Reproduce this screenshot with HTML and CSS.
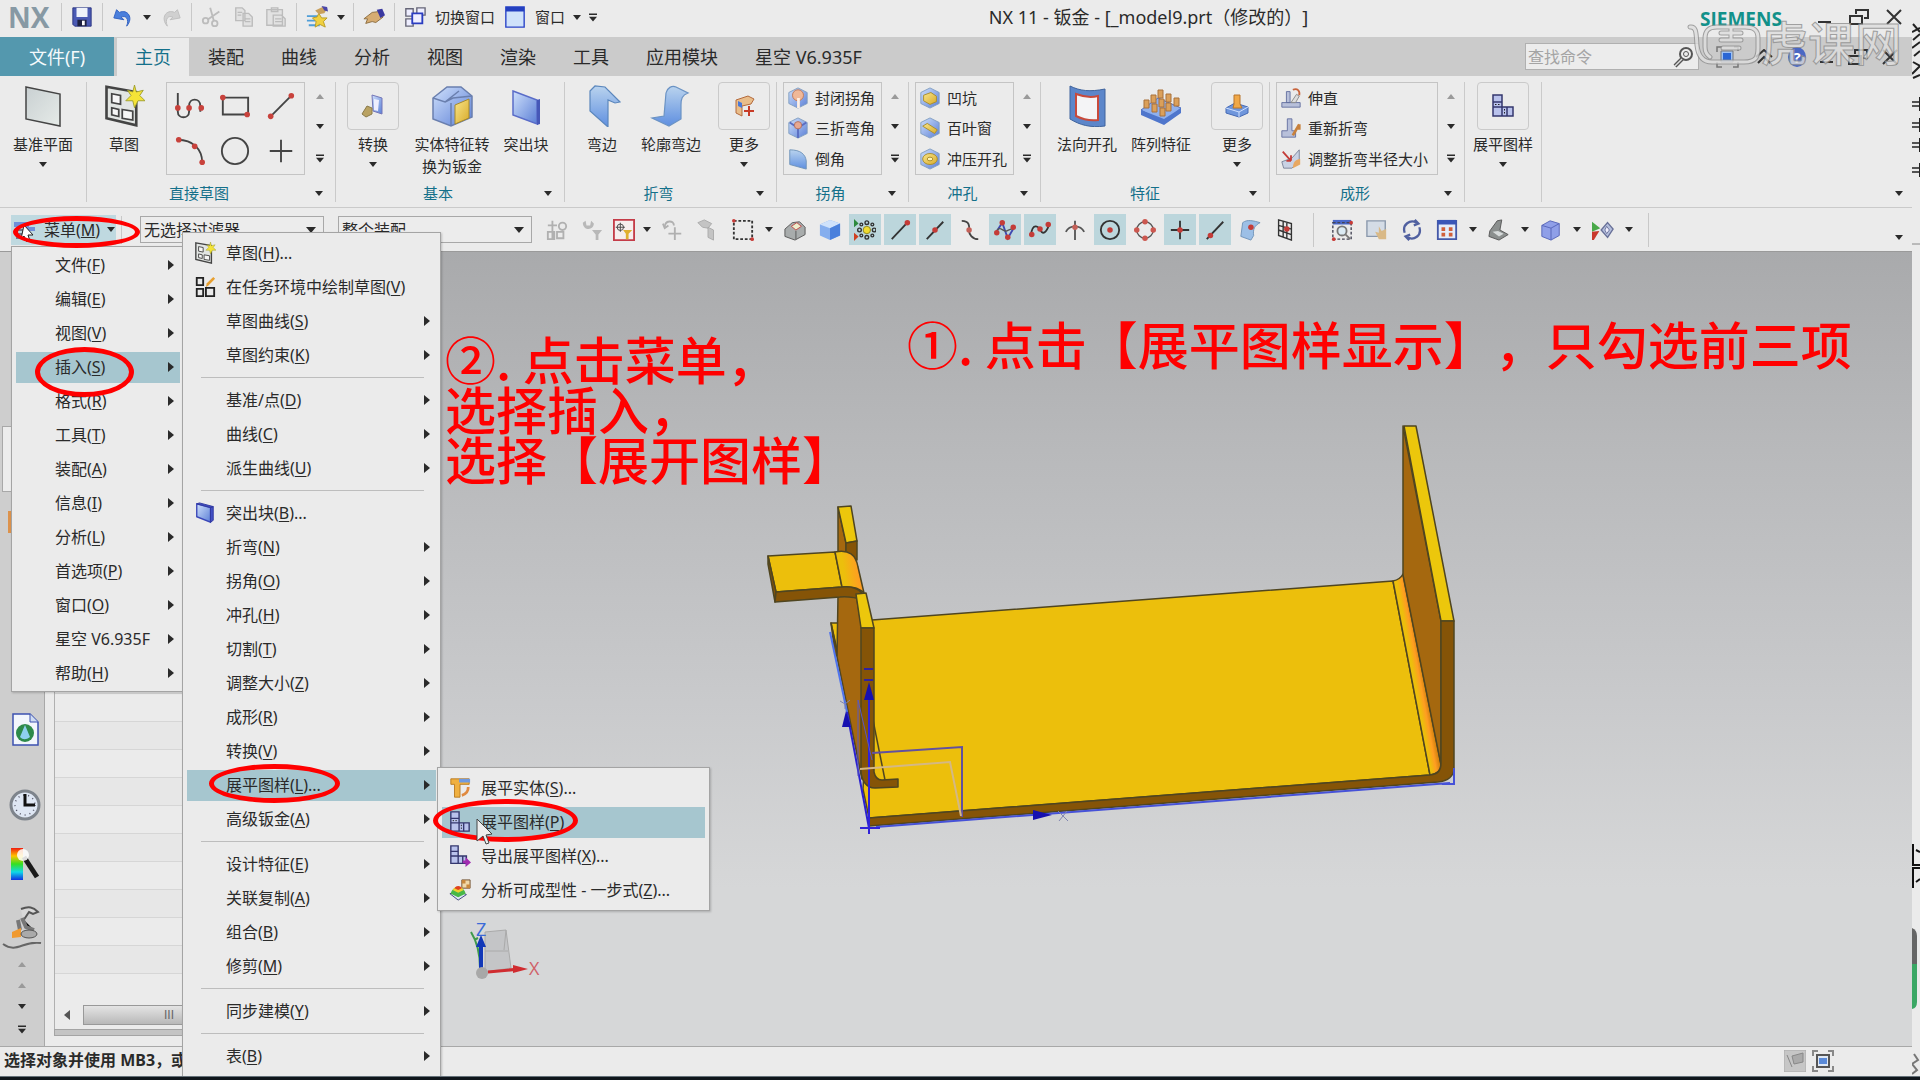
FILE: index.html
```html
<!DOCTYPE html>
<html lang="zh-CN">
<head>
<meta charset="utf-8">
<title>NX 11 - 钣金</title>
<link rel="stylesheet" href="styles.css">
</head>
<body>
<svg class="defs" width="0" height="0" aria-hidden="true">
  <defs>
    <linearGradient id="blue" x1="0" y1="0" x2="1" y2="1"><stop offset="0" stop-color="#cfe0fb"/><stop offset="1" stop-color="#5b7fd6"/></linearGradient>
    <linearGradient id="sky" x1="0" y1="0" x2="0" y2="1"><stop offset="0" stop-color="#b9d3ee"/><stop offset="1" stop-color="#5f8fe0"/></linearGradient>
    <linearGradient id="gold" x1="0" y1="0" x2="1" y2="1"><stop offset="0" stop-color="#f8e58a"/><stop offset="1" stop-color="#d9ab2a"/></linearGradient>
    <linearGradient id="plane" x1="0" y1="0" x2="1" y2="1"><stop offset="0" stop-color="#c9d0d2"/><stop offset="1" stop-color="#e6ebe8"/></linearGradient>
    <linearGradient id="bend" x1="0" y1="0" x2="1" y2="-0.2"><stop offset="0.2" stop-color="#ecbf0c"/><stop offset="0.7" stop-color="#ff9d22"/><stop offset="1" stop-color="#e88a10"/></linearGradient>
    <linearGradient id="longbend" gradientUnits="userSpaceOnUse" x1="1412" y1="677" x2="1423" y2="675"><stop offset="0.200" stop-color="#ecbf0c"/><stop offset="0.650" stop-color="#ff9d22"/><stop offset="1" stop-color="#d88410"/></linearGradient>
    <linearGradient id="rainbow" x1="0" y1="0" x2="0" y2="1"><stop offset="0" stop-color="#f01c10"/><stop offset="0.25" stop-color="#ffc400"/><stop offset="0.5" stop-color="#35e020"/><stop offset="0.75" stop-color="#10d8e8"/><stop offset="1" stop-color="#1030e0"/></linearGradient>
    <symbol id="down" viewBox="0 0 10 6"><path d="M0 0h10l-5 6z"/></symbol>
    <symbol id="up" viewBox="0 0 10 6"><path d="M0 6h10l-5-6z"/></symbol>
    <symbol id="more" viewBox="0 0 10 10"><path d="M0 0h10v2H0zM0 4h10l-5 6z"/></symbol>
    <symbol id="right" viewBox="0 0 6 10"><path d="M0 0v10l6-5z"/></symbol>
    <symbol id="restore" viewBox="0 0 20 16"><path d="M7 5V1h12v8h-4M1 7h12v8H1z" fill="none" stroke="#333" stroke-width="2"/></symbol>
    <symbol id="cross" viewBox="0 0 16 16"><path d="M1 1l14 14M15 1L1 15" stroke="#333" stroke-width="2"/></symbol>
    <symbol id="flat" viewBox="0 0 24 24"><path d="M2 1h9v21H2zM11 13h11v9H11z" fill="#b9c2ec" stroke="#34376e" stroke-width="1.5"/><path d="M2 8h9M2 13h9M16 13v9" stroke="#34376e" stroke-width="1.5"/><path d="M4 10.5h5M13.500 15v5" stroke="#222" stroke-dasharray="1.500 1.500"/></symbol>
    <symbol id="sheet" viewBox="0 0 24 24"><path d="M2 1l17 3v19L2 19z" fill="#e2e5e3" stroke="#444" stroke-width="1.500"/><path d="M5 5l5 1v5l-5-1zM5 13l4 1v4l-4-1zM11 14l6 1v5l-6-1z" fill="#f6f6f6" stroke="#444"/><path d="M18 0l1 4 4-1-2 3 3 3-4 0-2 4-1-4-4 0 3-3-2-3 3 1z" fill="#f5e437" stroke="#9a9a2a" stroke-width=".5"/></symbol>
    <symbol id="block" viewBox="0 0 24 24"><path d="M3 2l15 4v16L3 16z" fill="url(#blue)" stroke="#3a46b8" stroke-width="1.500"/><path d="M18 6l3-1v15l-3 2zM3 2l3-1 15 4-3 1z" fill="#4250c4" stroke="#3038a0"/></symbol>
    <symbol id="hex" viewBox="0 0 24 24"><path d="M12 1l10 5v12l-10 5L2 18V6z" fill="url(#blue)" stroke="#7f9cc0"/></symbol>
  </defs>
</svg>

<div class="app">
<div class="main">
  <header class="titlebar">
    <div class="quick">
      <span class="nx">NX</span><i class="sep"></i>
      <button class="qa" aria-label="保存"><svg viewBox="0 0 24 24"><path d="M2 2h20v20H4l-2-2z" fill="#4a5ab4" stroke="#2b3480"/><path d="M6 2h12v10H6z" fill="#eef2fa"/><path d="M7 15h10v7H7z" fill="#1c2040"/><path d="M12 16h3v5h-3z" fill="#fff"/></svg></button><i class="sep"></i>
      <button class="qa" aria-label="撤销"><svg viewBox="0 0 24 24"><path d="M2 13l3-9 3 3c9-4 16 6 8 15 3-8-1-12-6-10l3 3z" fill="#4a7fdc" stroke="#2f5fc0"/></svg></button>
      <svg class="caret" aria-hidden="true"><use href="#down"/></svg>
      <button class="qa" aria-label="重做"><svg viewBox="0 0 24 24"><path d="M22 13l-3-9-3 3C7 3 0 13 8 22 5 14 9 10 14 12l-3 3z" fill="#d0d0d0" stroke="#bdbdbd"/></svg></button><i class="sep"></i>
      <button class="qa" aria-label="剪切"><svg viewBox="0 0 24 24" fill="none" stroke="#bcbcbc" stroke-width="2"><path d="M10 2l4 14M20 6L7 15"/><circle cx="15" cy="19" r="3"/><circle cx="5" cy="16" r="3"/></svg></button>
      <button class="qa" aria-label="复制"><svg viewBox="0 0 24 24" fill="#e2e2e2" stroke="#bcbcbc" stroke-width="1.500"><path d="M3 2h7l3 3v11H3zM11 8h6l4 4v10H11z"/><path d="M5 7h5M5 10h4M13 14h6M13 17h6"/></svg></button>
      <button class="qa" aria-label="粘贴"><svg viewBox="0 0 24 24" fill="#e2e2e2" stroke="#bcbcbc" stroke-width="1.500"><path d="M2 4h17v17H2zM7 2h7v4H7zM9 10h9l4 4v8H9z"/><path d="M11 14h7M11 17h8"/></svg></button><i class="sep"></i>
      <button class="qa" aria-label="重复命令"><svg viewBox="0 0 24 24"><path d="M1 11h12M1 16h11M3 21h12" stroke="#4f9ed8" stroke-width="2"/><path d="M14 8l3 5 6 0-4 4 2 6-6-3-5 3 1-6-4-4 5-1z" fill="#f0d040" stroke="#b89a20"/><path d="M10 5l8-4 5 2-3 5-6 1z" fill="#c9a05c"/><path d="M17 0l6 1 1 5-4-1z" fill="#4a46a8"/></svg></button>
      <svg class="caret" aria-hidden="true"><use href="#down"/></svg><i class="sep"></i>
      <button class="qa" aria-label="触摸模式"><svg viewBox="0 0 24 24"><path d="M1 14l9-7 8-1 4 6-8 6-4-1-7 2 2-5z" fill="#d6ac72" stroke="#8a6a3c"/><path d="M15 4l6-1 3 7-5 3z" fill="#3a38a0"/></svg></button><i class="sep"></i>
      <button class="qa wide"><svg viewBox="0 0 24 24" fill="#eef" stroke="#667" stroke-width="1.500"><path d="M2 3h8v8H2zM14 2h9v8h-9zM2 14h8v8H2z"/><path d="M9 8h11v11H9z" stroke="#2a3cc0" stroke-width="2"/></svg><span>切换窗口</span></button>
      <button class="qa wide"><svg viewBox="0 0 24 24"><path d="M2 1h20v22H2z" fill="#cfe2fb" stroke="#2a44c8" stroke-width="1.500"/><path d="M2 1h20v5H2z" fill="#2440c0"/></svg><span>窗口</span></button>
      <svg class="caret" aria-hidden="true"><use href="#down"/></svg>
      <svg class="caret tall" aria-hidden="true"><use href="#more"/></svg>
    </div>
    <h1 class="doc-title">NX 11 - 钣金 - [_model9.prt（修改的）]</h1>
    <div class="brand">SIEMENS</div>
    <div class="winbtns">
      <button aria-label="最小化"><svg width="14" height="16"><path d="M0 13h13" stroke="#333" stroke-width="2"/></svg></button>
      <button aria-label="还原"><svg width="20" height="16"><use href="#restore"/></svg></button>
      <button aria-label="关闭"><svg width="16" height="16"><use href="#cross"/></svg></button>
    </div>
  </header>

  <nav class="tabs">
    <button class="tab file">文件(F)</button>
    <button class="tab active">主页</button><button class="tab">装配</button><button class="tab">曲线</button><button class="tab">分析</button><button class="tab">视图</button><button class="tab">渲染</button><button class="tab">工具</button><button class="tab">应用模块</button><button class="tab">星空 V6.935F</button>
    <label class="search"><input type="text" placeholder="查找命令" aria-label="查找命令"><svg width="22" height="22" fill="none" stroke="#555"><circle cx="14" cy="8" r="6" stroke-width="2"/><circle cx="14" cy="8" r="2.500"/><path d="M10 13l-7 7" stroke-width="4"/><path d="M10 13l-7 7" stroke-width="1.500" stroke="#ddd"/></svg></label>
    <div class="tabtools">
      <button aria-label="全屏"><svg width="24" height="22"><path d="M1 6V1h5M18 1h4v4M1 16v5h5M22 16v5h-5" fill="none" stroke="#777" stroke-width="1.500"/><path d="M5 5h12v11H5z" fill="#9ec2f4" stroke="#777"/><path d="M7 7h8v7H7z" fill="#2a66d4"/></svg></button>
      <button aria-label="折叠功能区"><svg width="20" height="16"><path d="M2 8l8-7 8 7M4 14l6-6 6 6" fill="none" stroke="#333" stroke-width="2"/></svg></button>
      <button class="help" aria-label="帮助">?</button>
      <button aria-label="最小化文档"><svg width="14" height="16"><path d="M0 13h13" stroke="#333" stroke-width="2"/></svg></button>
      <button aria-label="还原文档"><svg width="20" height="16"><use href="#restore"/></svg></button>
      <button aria-label="关闭文档"><svg width="16" height="16"><use href="#cross"/></svg></button>
    </div>
  </nav>

  <section class="ribbon">
    <div class="group g-plane"><div class="gbody">
      <button class="big"><span class="pic"><svg viewBox="0 0 42 42"><path d="M4 2l34 7v32L4 34z" fill="url(#plane)" stroke="#444" stroke-width="1.500"/></svg></span>基准平面<svg class="caret"><use href="#down"/></svg></button>
    </div></div>
    <div class="group g-sketch"><div class="gbody">
      <button class="big size-m"><span class="pic"><svg viewBox="0 0 24 24"><use href="#sheet"/></svg></span>草图</button>
      <div class="curves">
        <button aria-label="轮廓"><svg viewBox="0 0 32 32" fill="none" stroke="#444" stroke-width="2"><path d="M3 2v20c0 8 12 8 12 0v-6c0-9 12-9 12 0v6"/><g fill="#c8423c" stroke="none"><circle cx="3" cy="18" r="3"/><circle cx="15" cy="18" r="3"/><circle cx="28" cy="18" r="3"/></g></svg></button>
        <button aria-label="矩形"><svg viewBox="0 0 32 32" fill="none" stroke="#444" stroke-width="2"><path d="M3 7h27v18H3z"/><g fill="#c8423c" stroke="none"><circle cx="3" cy="7" r="3"/><circle cx="29" cy="25" r="3"/></g></svg></button>
        <button aria-label="直线"><svg viewBox="0 0 32 32" fill="none" stroke="#444" stroke-width="2"><path d="M5 27L27 5"/><g fill="#c8423c" stroke="none"><circle cx="5" cy="27" r="3"/><circle cx="27" cy="5" r="3"/></g></svg></button>
        <button aria-label="圆弧"><svg viewBox="0 0 32 32" fill="none" stroke="#444" stroke-width="2"><path d="M3 4c16 0 26 10 26 24"/><g fill="#c8423c" stroke="none"><circle cx="4" cy="4" r="3"/><circle cx="21" cy="11" r="3"/><circle cx="29" cy="28" r="3"/></g></svg></button>
        <button aria-label="圆"><svg viewBox="0 0 32 32"><circle cx="16" cy="16" r="14" fill="none" stroke="#444" stroke-width="2"/></svg></button>
        <button aria-label="点"><svg viewBox="0 0 32 32"><path d="M16 4v24M4 16h24" stroke="#444" stroke-width="2"/></svg></button>
      </div>
      <div class="scroll"><svg class="caret dim"><use href="#up"/></svg><svg class="caret"><use href="#down"/></svg><svg class="caret tall"><use href="#more"/></svg></div>
    </div><div class="gfoot"><span>直接草图</span><svg class="caret"><use href="#down"/></svg></div></div>
    <div class="group g-basic"><div class="gbody">
      <button class="big size-m"><span class="pic framed"><svg viewBox="0 0 24 24"><path d="M11 1l10 3v16l-9-3z" fill="url(#blue)" stroke="#7476b8"/><path d="M13 5l5 1-1 11-4-1z" fill="#eef"/><path d="M1 20l5-8 5 2v6l-6 3z" fill="#b9a262" stroke="#8a7a4a"/></svg></span>转换<svg class="caret"><use href="#down"/></svg></button>
      <button class="big size-l"><span class="pic"><svg viewBox="0 0 42 42"><path d="M2 13L16 2h14l11 9v21L20 41 2 34z" fill="url(#blue)" stroke="#6a7fae" stroke-width="1.500"/><path d="M2 13l12 4 14-11M14 17l8-4 19-2M20 18v23" fill="none" stroke="#6a7fae" stroke-width="1.500"/><path d="M24 20l14-6v19l-14 6z" fill="url(#gold)" stroke="#a88a2a"/></svg></span>实体特征转<br>换为钣金</button>
      <button class="big size-s"><span class="pic"><svg viewBox="0 0 42 42"><path d="M8 6l24 9v24L8 30z" fill="url(#blue)" stroke="#5a6cc8" stroke-width="1.500"/><path d="M32 15l3-1v25l-3 1z" fill="#4658b8"/></svg></span>突出块</button>
    </div><div class="gfoot"><span>基本</span><svg class="caret"><use href="#down"/></svg></div></div>
    <div class="group g-fold"><div class="gbody">
      <button class="big size-m"><span class="pic"><svg viewBox="0 0 42 42"><path d="M9 6l5-5 10 1 15 15-5 1-7-3v27L9 26z" fill="url(#sky)" stroke="#5b87bd" stroke-width="1.200"/></svg></span>弯边</button>
      <button class="big size-s"><span class="pic"><svg viewBox="0 0 42 42"><path d="M16 8c1-5 6-8 10-6l12 6c-6 2-7 6-7 12v14l-12 7L2 33l12-2z" fill="url(#sky)" stroke="#6b93c4" stroke-width="1.200"/></svg></span>轮廓弯边</button>
      <button class="big size-s push"><span class="pic framed"><svg viewBox="0 0 24 24"><path d="M4 6l12-4 6 3-3 5-9 2v10l-6-3z" fill="#e9bd8a" stroke="#b46a3c"/><path d="M6 7l4 2v5l-4-2z" fill="#4a78d8"/><path d="M17 12v10M12 17h10" stroke="#c83c28" stroke-width="2"/></svg></span>更多<svg class="caret"><use href="#down"/></svg></button>
    </div><div class="gfoot"><span>折弯</span><svg class="caret"><use href="#down"/></svg></div></div>
    <div class="group g-corner"><div class="gbody">
      <div class="list">
        <button><svg viewBox="0 0 24 24"><use href="#hex"/><circle cx="12" cy="9" r="6" fill="#f0b898" stroke="#c07a5a"/><path d="M11 12h3v11h-3z" fill="#fff0e4"/></svg>封闭拐角</button>
        <button><svg viewBox="0 0 24 24"><use href="#hex"/><path d="M12 12v11M12 12L3 6M12 12l9-6" stroke="#5a6cc0" stroke-width="2"/><circle cx="12" cy="9" r="4" fill="#e8a890" stroke="#b07060"/></svg>三折弯角</button>
        <button><svg viewBox="0 0 24 24"><path d="M3 2c12 0 17 5 18 12v9L3 18z" fill="url(#sky)" stroke="#6f93b8"/></svg>倒角</button>
      </div>
      <div class="scroll"><svg class="caret dim"><use href="#up"/></svg><svg class="caret"><use href="#down"/></svg><svg class="caret tall"><use href="#more"/></svg></div>
    </div><div class="gfoot"><span>拐角</span><svg class="caret"><use href="#down"/></svg></div></div>
    <div class="group g-punch"><div class="gbody">
      <div class="list">
        <button><svg viewBox="0 0 24 24"><use href="#hex"/><path d="M5 9l8-3 6 4v6l-7 3-7-4z" fill="url(#gold)" stroke="#a68c2c"/></svg>凹坑</button>
        <button><svg viewBox="0 0 24 24"><use href="#hex"/><path d="M4 10l5-3 11 7-3 4z" fill="url(#gold)" stroke="#a68c2c"/></svg>百叶窗</button>
        <button><svg viewBox="0 0 24 24"><use href="#hex"/><ellipse cx="12" cy="12" rx="8" ry="6" fill="url(#gold)" stroke="#a68c2c"/><ellipse cx="12" cy="12" rx="3" ry="2" fill="#fff2b0" stroke="#a68c2c"/></svg>冲压开孔</button>
      </div>
      <div class="scroll"><svg class="caret dim"><use href="#up"/></svg><svg class="caret"><use href="#down"/></svg><svg class="caret tall"><use href="#more"/></svg></div>
    </div><div class="gfoot"><span>冲孔</span><svg class="caret"><use href="#down"/></svg></div></div>
    <div class="group g-feature"><div class="gbody">
      <button class="big size-l"><span class="pic"><svg viewBox="0 0 42 42"><path d="M4 1c10 5 20 6 35 3v37C24 43 14 40 4 34z" fill="#5c86ca" stroke="#3f639c"/><path d="M10 9c8 3 14 4 22 2v24c-8 1-14 0-22-4z" fill="#f4f4f6" stroke="#c84a3c" stroke-width="2"/></svg></span>法向开孔</button>
      <button class="big size-s"><span class="pic"><svg viewBox="0 0 42 42"><path d="M1 25l17-12 23 10-17 15z" fill="#8fb0ee" stroke="#4f6fc0"/><path d="M1 25l23 9v6L1 30zM24 34l17-11v5L24 40z" fill="#4f76cc"/><g fill="#dba05a" stroke="#a8703a"><path d="M18 5h5v8h-5zM26 9h5v8h-5zM34 13h5v8h-5zM11 10h5v8h-5zM19 14h5v8h-5zM26 18h5v8h-5zM4 15h5v8H4zM12 19h5v8h-5zM20 23h5v8h-5z"/></g></svg></span>阵列特征</button>
      <button class="big size-s push"><span class="pic framed"><svg viewBox="0 0 24 24"><path d="M1 14l9-5 13 4v6l-9 4-13-4z" fill="#6f96dc" stroke="#466ab4"/><path d="M1 14l13 4 9-5M14 18v5" fill="none" stroke="#cfe0ff"/><path d="M9 1h6v9l2 4H8l1-4z" fill="#f0a848" stroke="#b8742a"/></svg></span>更多<svg class="caret"><use href="#down"/></svg></button>
    </div><div class="gfoot"><span>特征</span><svg class="caret"><use href="#down"/></svg></div></div>
    <div class="group g-form"><div class="gbody">
      <div class="list wide">
        <button><svg viewBox="0 0 24 24"><path d="M2 17h20v5H2zM7 5h4v12H7z" fill="#b8c0da" stroke="#6470a0"/><path d="M12 17l6-9 3 2-4 7z" fill="#ddd" stroke="#888"/><path d="M14 3c5-2 8 1 7 6" fill="none" stroke="#c8643c" stroke-width="2"/></svg>伸直</button>
        <button><svg viewBox="0 0 24 24"><path d="M2 15h6V2h5v13h4v7H2z" fill="#b8c0da" stroke="#6470a0"/><path d="M14 20l7-12M21 8v6" stroke="#c8813c" stroke-width="3"/></svg>重新折弯</button>
        <button><svg viewBox="0 0 24 24"><path d="M2 15l11-4 8-9v12l-8 8H4z" fill="#c9d2e4" stroke="#7a8298"/><path d="M3 4l9 10M12 14v-6M12 14H7" stroke="#c43c38" stroke-width="2"/><path d="M14 22c0-6 3-10 8-10v6z" fill="#e8a862"/></svg>调整折弯半径大小</button>
      </div>
      <div class="scroll"><svg class="caret dim"><use href="#up"/></svg><svg class="caret"><use href="#down"/></svg><svg class="caret tall"><use href="#more"/></svg></div>
    </div><div class="gfoot"><span>成形</span><svg class="caret"><use href="#down"/></svg></div></div>
    <div class="group g-flat"><div class="gbody">
      <button class="big"><span class="pic framed"><svg viewBox="0 0 24 24"><use href="#flat"/></svg></span>展平图样<svg class="caret"><use href="#down"/></svg></button>
    </div></div>
    <svg class="caret ribbon-more"><use href="#down"/></svg>
  </section>

  <section class="selbar">
    <button class="menu-btn"><svg width="24" height="24"><path d="M1 4h15v5H1zM13 9h9v4h-9z" fill="#6f8fd8"/><path d="M3 12h9M3 16h9M3 20h9" stroke="#778" stroke-width="2"/><path d="M11 7l9 10h-5l2 6-3 1-3-6-3 3z" fill="#fff" stroke="#222"/></svg><span>菜单(<u>M</u>)</span><svg class="caret"><use href="#down"/></svg></button>
    <i class="sep"></i>
    <div class="combo"><select aria-label="选择过滤器"><option>无选择过滤器</option></select><svg class="caret big-caret"><use href="#down"/></svg></div>
    <div class="combo second"><select aria-label="选择范围"><option>整个装配</option></select><svg class="caret big-caret"><use href="#down"/></svg></div>
    <div class="tools">
      <button class="tool" aria-label="装配导航"><svg viewBox="0 0 24 24" fill="none" stroke="#b0b0b0" stroke-width="2"><path d="M7 2v20M2 7h10M2 14h7v8H2zM12 14h7v7h-7z"/><circle cx="18" cy="8" r="4"/></svg></button>
      <button class="tool" aria-label="重置过滤器"><svg viewBox="0 0 24 24" fill="#b8b8b8"><path d="M2 4c0 9 12 9 12 1l-3-3-1 5-4 0-1-5z"/><path d="M12 12h11l-4 5v6h-3v-6z"/></svg></button>
      <button class="tool slim" aria-label="类型过滤器"><svg viewBox="0 0 24 24"><path d="M1 1h22v22H1z" fill="#f6eeee" stroke="#c43c48" stroke-width="2"/><path d="M8 4v10M3 9h10" stroke="#444"/><circle cx="8" cy="9" r="3.500" fill="none" stroke="#444"/><path d="M11 12h10l-4 4v6h-3v-6z" fill="#e0b030"/></svg></button>
      <svg class="caret"><use href="#down"/></svg>
      <button class="tool" aria-label="上一选择"><svg viewBox="0 0 24 24" fill="none" stroke="#b0b0b0" stroke-width="2"><path d="M3 9c0-8 10-8 10-2M14 9v14M7 16h14"/><path d="M1 5l2 5 4-3"/></svg></button>
      <button class="tool" aria-label="选择优先级"><svg viewBox="0 0 24 24"><path d="M1 4l7-3 8 4-4 5-6-1zM12 9l6 3v11l-6-3z" fill="#c4c4c4" stroke="#aaa"/></svg></button>
      <button class="tool" aria-label="矩形选择"><svg viewBox="0 0 24 24"><path d="M2 2h20v20H2z" fill="none" stroke="#333" stroke-width="2" stroke-dasharray="3 2"/><circle cx="2" cy="2" r="2" fill="#c83c38"/><circle cx="22" cy="22" r="2" fill="#c83c38"/></svg></button>
      <svg class="caret"><use href="#down"/></svg>
      <button class="tool" aria-label="隐藏实体"><svg viewBox="0 0 24 24"><path d="M1 11l8-7 8-1 6 6v8l-11 6L1 19z" fill="#a8acac" stroke="#555"/><path d="M8 8l6-4 5 4-6 4z" fill="#eec" stroke="#c04848"/><path d="M13 13v9" stroke="#555"/></svg></button>
      <button class="tool" aria-label="着色"><svg viewBox="0 0 24 24"><path d="M1 6l11-5 11 4v13l-11 5-11-5z" fill="#85aeee"/><path d="M1 6l11 4 11-5-11-4z" fill="#cfe2fb"/><path d="M12 10v13l11-5V5z" fill="#4a80dc"/></svg></button>
      <button class="tool on" aria-label="启用捕捉点"><svg viewBox="0 0 24 24"><path d="M0 0l5 5-5 4z" fill="#2c8a3c"/><path d="M0 15l5 4-5 5z" fill="#d04020"/><circle cx="14" cy="12" r="4" fill="#f0dc30" stroke="#8a8020"/><g fill="none" stroke="#333" stroke-width="1.500"><circle cx="14" cy="4" r="2"/><circle cx="14" cy="20" r="2"/><circle cx="6" cy="12" r="2"/><circle cx="22" cy="12" r="2"/><circle cx="8" cy="6" r="1.500"/><circle cx="20" cy="6" r="1.500"/><circle cx="8" cy="18" r="1.500"/><circle cx="20" cy="18" r="1.500"/></g></svg></button>
      <button class="tool on" aria-label="端点"><svg viewBox="0 0 24 24"><path d="M3 22L20 4" stroke="#333" stroke-width="2"/><circle cx="20" cy="4" r="3" fill="#c43c38"/></svg></button>
      <button class="tool on" aria-label="中点"><svg viewBox="0 0 24 24"><path d="M3 22L21 3" stroke="#333" stroke-width="2"/><circle cx="12" cy="12" r="3" fill="#c43c38"/></svg></button>
      <button class="tool" aria-label="控制点"><svg viewBox="0 0 24 24"><path d="M3 2c10 0 8 8 8 11s3 9 10 9" fill="none" stroke="#444" stroke-width="2"/><circle cx="11" cy="12" r="3" fill="#c46058"/></svg></button>
      <button class="tool on" aria-label="极点"><svg viewBox="0 0 24 24"><path d="M2 15L9 4l6 17 7-12" fill="none" stroke="#4048b0" stroke-width="2"/><path d="M2 15c4-10 8 0 12-2s6-2 8-4" fill="none" stroke="#555" stroke-width="1.500"/><g fill="#c43c38"><circle cx="3" cy="15" r="3"/><circle cx="9" cy="4" r="3"/><circle cx="15" cy="20" r="3"/><circle cx="21" cy="9" r="3"/></g></svg></button>
      <button class="tool on" aria-label="样条定义点"><svg viewBox="0 0 24 24"><path d="M2 18c2-16 9-9 11-5s6 2 9-7" fill="none" stroke="#333" stroke-width="2"/><g fill="#c43c38"><circle cx="3" cy="17" r="3"/><circle cx="12" cy="11" r="3"/><circle cx="21" cy="6" r="3"/></g></svg></button>
      <button class="tool" aria-label="交点"><svg viewBox="0 0 24 24"><path d="M12 2v21M2 14c4-8 16-8 20 0" fill="none" stroke="#555" stroke-width="2"/><circle cx="12" cy="9" r="3" fill="#c46058"/></svg></button>
      <button class="tool on" aria-label="圆心"><svg viewBox="0 0 24 24"><circle cx="12" cy="12" r="10" fill="none" stroke="#333" stroke-width="2"/><circle cx="12" cy="12" r="3" fill="#c43c38"/></svg></button>
      <button class="tool" aria-label="象限点"><svg viewBox="0 0 24 24"><circle cx="12" cy="12" r="9" fill="none" stroke="#555" stroke-width="1.500"/><g fill="#cc5850"><circle cx="12" cy="3" r="3"/><circle cx="12" cy="21" r="3"/><circle cx="3" cy="12" r="3"/><circle cx="21" cy="12" r="3"/></g></svg></button>
      <button class="tool on" aria-label="现有点"><svg viewBox="0 0 24 24"><path d="M12 2v20M2 12h20" stroke="#333" stroke-width="2"/><circle cx="12" cy="12" r="3" fill="#c43c38"/></svg></button>
      <button class="tool on" aria-label="曲线上的点"><svg viewBox="0 0 24 24"><path d="M3 22L21 3" stroke="#333" stroke-width="2"/><circle cx="7" cy="18" r="3" fill="#c43c38"/></svg></button>
      <button class="tool" aria-label="面上的点"><svg viewBox="0 0 24 24"><path d="M4 4c5-4 12-2 19 0-6 3-8 7-7 14l-3 5L2 19z" fill="#9cbfe6" stroke="#6f93b8"/><circle cx="13" cy="9" r="3" fill="#c43c38"/></svg></button>
      <button class="tool" aria-label="有界栅格点"><svg viewBox="0 0 24 24"><path d="M5 1l14 4v18L5 18zM5 7l14 4M5 12l14 5M10 3v17M14 4v17" fill="none" stroke="#333" stroke-width="1.500"/><circle cx="14" cy="11" r="3" fill="#c43c38"/></svg></button>
      <i class="sep"></i>
      <button class="tool" aria-label="适合窗口"><svg viewBox="0 0 24 24"><path d="M2 1h20v5H2z" fill="#4a68c8"/><path d="M2 4h20v18H2z" fill="none" stroke="#445" stroke-width="1.500" stroke-dasharray="3 2"/><circle cx="12" cy="13" r="5" fill="#dcebf4" stroke="#777" stroke-width="2"/><path d="M16 17l5 5" stroke="#777" stroke-width="2"/><circle cx="3" cy="22" r="2" fill="#c83c38"/><circle cx="22" cy="4" r="2" fill="#c83c38"/></svg></button>
      <button class="tool" aria-label="平移"><svg viewBox="0 0 24 24"><path d="M1 2h20v17H1z" fill="#d4dce6" stroke="#8a98ac" stroke-width="1.500"/><path d="M10 14l4 1V8l3 5 5-2v11h-8z" fill="#d9b987"/></svg></button>
      <button class="tool" aria-label="旋转"><svg viewBox="0 0 24 24" fill="none" stroke="#5060a0" stroke-width="2.500"><path d="M4 15C1 6 10 0 17 4M20 9c3 9-6 15-13 11"/><path d="M15 1l4 4-5 2M9 23l-4-4 5-2"/></svg></button>
      <button class="tool" aria-label="布局"><svg viewBox="0 0 24 24"><path d="M2 2h20v20H2z" fill="#e4ecfa" stroke="#4458a8" stroke-width="2"/><path d="M2 1h20v5H2z" fill="#3a56b8"/><path d="M6 9h4v4H6zM14 9h4v4h-4zM6 15h4v4H6zM14 15h4v4h-4z" fill="#d0603c"/></svg></button>
      <svg class="caret"><use href="#down"/></svg>
      <button class="tool" aria-label="定向视图"><svg viewBox="0 0 24 24"><path d="M2 13L10 2l5-1-2 11 9 5-10 6-11-4z" fill="#8b8f8e" stroke="#555"/><path d="M5 14l6-1 6 3-5 3z" fill="#d6dada"/></svg></button>
      <svg class="caret"><use href="#down"/></svg>
      <button class="tool" aria-label="渲染样式"><svg viewBox="0 0 24 24"><path d="M2 7l9-5 10 3v13l-9 5-10-4z" fill="#8f9fe8" stroke="#5464b8"/><path d="M2 7l10 3 9-5M12 10v13" fill="none" stroke="#5464b8"/></svg></button>
      <svg class="caret"><use href="#down"/></svg>
      <button class="tool" aria-label="剪切截面"><svg viewBox="0 0 24 24"><path d="M0 3l9 7-9 4z" fill="#48a848"/><path d="M0 14l8-1-6 10H0z" fill="#c8382c"/><path d="M17 4l6 7-6 9-7-8z" fill="#b4bedc" stroke="#687098" stroke-width="1.500"/><path d="M16 8l3 4-3 4-2-4z" fill="#eef" stroke="#687098"/></svg></button>
      <svg class="caret"><use href="#down"/></svg>
      <i class="sep"></i>
    </div>
    <svg class="caret selbar-more"><use href="#down"/></svg>
  </section>

  <div class="work">
    <aside class="resources">
      <div class="res-tab"></div>
      <i class="res-mark"></i>
      <div class="res-icons">
        <button aria-label="网页浏览器"><svg width="32" height="34"><path d="M4 1h17l8 8v23H4z" fill="#f2f6fc" stroke="#3c52b0" stroke-width="1.500"/><path d="M21 1v8h8" fill="#cfdcf2" stroke="#3c52b0"/><circle cx="16" cy="20" r="9" fill="#2d8a4a"/><path d="M16 12l5 12c-4 3-7 3-10 0z" fill="#8fd0ee"/></svg></button>
        <button aria-label="历史记录"><svg width="32" height="34"><circle cx="16" cy="17" r="14" fill="#dfe7f4" stroke="#7e848c" stroke-width="3"/><circle cx="16" cy="17" r="10" fill="none" stroke="#556" stroke-width="1.500" stroke-dasharray="1 4"/><path d="M16 6v11h10" fill="none" stroke="#111" stroke-width="3"/></svg></button>
        <button aria-label="系统材料"><svg width="32" height="34"><path d="M2 1h12v32H2z" fill="url(#rainbow)"/><path d="M15 10l13 20" stroke="#1a1a1a" stroke-width="5"/><circle cx="14" cy="8" r="6" fill="#fff" opacity=".85"/></svg></button>
        <button aria-label="Process Studio"><svg width="32" height="36"><path d="M12 3c8-3 12-2 17 3l-5 2-4-2-6 9" fill="#d8d8d8" stroke="#555" stroke-width="2"/><path d="M13 12l4 9 8 3M9 14l2 10" stroke="#777" stroke-width="4"/><path d="M3 26l9-4v9l-9 1z" fill="#f09a30"/><ellipse cx="20" cy="28" rx="8" ry="4" fill="#aaa" stroke="#555"/></svg></button>
      </div>
      <svg class="squiggle" width="40" height="8"><path d="M1 2c14 10 20-4 38-1" fill="none" stroke="#666" stroke-width="2"/></svg>
      <div class="res-scroll"><svg class="caret dim"><use href="#up"/></svg><svg class="caret dim"><use href="#up"/></svg><svg class="caret"><use href="#down"/></svg><svg class="caret tall"><use href="#more"/></svg></div>
    </aside>
    <aside class="navigator">
      <div class="rows"></div>
      <div class="hscroll"><svg width="6" height="10"><path d="M6 0v10L0 5z"/></svg><div class="thumb">III</div></div>
      <div class="nav-foot"></div>
    </aside>
    <main class="stage">
      <svg class="scene" viewBox="441 252 1471 794" preserveAspectRatio="xMinYMin meet" role="img" aria-label="钣金模型">
        <g stroke="#4f4520" stroke-width="1.500" stroke-linejoin="round">
          <path d="M831 623h8v36z" fill="#ecbf0c"/>
          <path d="M831 623l7 34-3-3z" fill="#855407"/>
          <path d="M872 620l521-39 37 194-561 43-6-29z" fill="#ecbf0c"/>
          <path d="M1393 581c5-1 8-3 10-7l38 190c0 7-4 10-11 11z" fill="url(#longbend)"/>
          <path d="M1403 426v149l38 190V621z" fill="#a5680f"/>
          <path d="M1404 426h12l38 195h-13z" fill="#ecc70c"/>
          <path d="M1441 621h13v147c0 8-6 13-16 14L869 826v-8l561-43c8-1 11-4 11-12z" fill="#855407"/>
          <path d="M838 507l8 36v20l-8-5z" fill="#a5680f"/>
          <path d="M838 507l13-1 6 35-11 2z" fill="#ecc70c"/>
          <path d="M846 543l11-2v19l-11-5z" fill="#855407"/>
          <path d="M838 596l18-2 6 35v150l-25-122z" fill="#a5680f"/>
          <path d="M768 556l67-4 7 35-66 5z" fill="#ecbf0c"/>
          <path d="M835 552c14-3 21 3 23 15l6 26c-5-5-12-7-22-6z" fill="url(#bend)"/>
          <path d="M768 556l8 36-1 10-7-38z" fill="#855407"/>
          <path d="M776 592l66-5c10-1 16 2 20 6l-6 5c-6-1-10-2-16-1l-65 5z" fill="#855407"/>
          <path d="M873 720l12 60" fill="none"/>
          <path d="M856 594l10-1 8 35h-13z" fill="#ecc70c"/>
          <path d="M861 628h13v144c1 5 3 8 8 8l16-1v8l-23 1c-9 0-14-8-14-18z" fill="#855407"/>
        </g>
        <g fill="none" stroke-width="2">
          <path d="M830 632l17 80" stroke="#4f74ee"/>
          <path d="M847 712l22 116" stroke="#2a20d0"/>
          <path d="M876 827l574-44M1454 768v16h-12" stroke="#4652d8"/>
          <path d="M869 698v136M860 828h20" stroke="#3022d8"/>
          <path d="M858 700v76M858 700l14 60" stroke="#5a58c0" stroke-width="1"/>
          <path d="M872 753l90-6v70" stroke="#6150a0"/>
          <path d="M860 769l90-7 11 54" stroke="#d4b884"/>
          <path d="M864 669h9M864 680h9" stroke="#3022a0"/>
          <path d="M840 701l5 3 5-4M845 704v5M1058 811l10 10M1067 811l-8 10" stroke="#8084b0" stroke-width="1"/>
        </g>
        <path d="M869 682l5 18h-10zM846 711l5 16h-9zM1052 815l-19-5v10z" fill="#1610b0"/>
        <g>
          <path d="M485 932l21-2 5 38-26 4zM485 951h23M506 930l-2 20" fill="#c4c5c7" stroke="#aaa"/>
          <path d="M480 968c0-18-4-28-9-36M474 940l4-2" fill="none" stroke="#3f9a4a" stroke-width="2"/>
          <path d="M481 968v-24" stroke="#1238b8" stroke-width="4"/><path d="M481 935l5 12h-10z" fill="#1238b8"/>
          <path d="M488 972l32-3" stroke="#d02c30" stroke-width="3"/><path d="M528 969l-15-4v8z" fill="#d02c30"/>
          <circle cx="482" cy="973" r="6" fill="#a8a8a8"/>
          <text x="476" y="936" class="axis z">Z</text>
          <text x="529" y="975" class="axis x">X</text>
        </g>
      </svg>
      <p class="note first">①. 点击【展平图样显示】，只勾选前三项</p>
      <p class="note second">②. 点击菜单，<br>选择插入，<br>选择【展开图样】</p>
    </main>
  </div>

  <footer class="status">
    <span>选择对象并使用 MB3，或</span>
    <div class="status-icons">
      <svg width="22" height="22"><path d="M0 0h22v22H0z" fill="#c6c6c6" stroke="#aaa"/><path d="M3 5l5 12M8 6l11-3v9l-9 2z" fill="#aaa" stroke="#888"/></svg>
      <svg width="22" height="22"><path d="M1 6V1h5M16 1h5v5M1 16v5h5M21 16v5h-5" fill="none" stroke="#888" stroke-width="2"/><path d="M5 5h12v12H5z" fill="#dfe8f4" stroke="#555" stroke-width="2"/><path d="M7 8h8v6H7z" fill="#5a8ad8"/></svg>
    </div>
  </footer>
</div>

<svg class="edge" viewBox="0 0 8 1080" preserveAspectRatio="xMinYMin slice" aria-hidden="true">
  <g fill="none" stroke="#222" stroke-width="2">
    <path d="M1 24l7 8M0 32l8-4M1 40l7-6M0 48l8-6M2 56l6-5M1 62l7 4M0 74l8-8M1 78l7-3"/>
    <path d="M0 102h8M0 106h8M0 123h8M0 127h8M0 143h8M0 147h8M0 168h8M0 172h8" stroke-width="1.500"/>
    <path d="M8 97v14M8 118v14M8 138v14M8 163v14"/>
    <path d="M0 244h8" stroke="#888" stroke-width="1"/>
    <path d="M1 844v21h7M1 888v-20h7M4 850l4 2M4 882l4-3" stroke="#111"/>
    <path d="M2 1054l4 6-6 4 5 6-5 4" stroke="#777"/>
  </g>
  <path d="M0 928q5 2 5 8v28H0z" fill="#666"/><path d="M0 964h5v38q0 6-5 7z" fill="#3ba765"/>
</svg>
</div>
<div class="taskbar"></div>

<ul class="menu root">
  <li><button>文件(<u>F</u>)<svg class="arrow"><use href="#right"/></svg></button></li>
  <li><button>编辑(<u>E</u>)<svg class="arrow"><use href="#right"/></svg></button></li>
  <li><button>视图(<u>V</u>)<svg class="arrow"><use href="#right"/></svg></button></li>
  <li><button class="hot">插入(<u>S</u>)<svg class="arrow"><use href="#right"/></svg></button></li>
  <li><button>格式(<u>R</u>)<svg class="arrow"><use href="#right"/></svg></button></li>
  <li><button>工具(<u>T</u>)<svg class="arrow"><use href="#right"/></svg></button></li>
  <li><button>装配(<u>A</u>)<svg class="arrow"><use href="#right"/></svg></button></li>
  <li><button>信息(<u>I</u>)<svg class="arrow"><use href="#right"/></svg></button></li>
  <li><button>分析(<u>L</u>)<svg class="arrow"><use href="#right"/></svg></button></li>
  <li><button>首选项(<u>P</u>)<svg class="arrow"><use href="#right"/></svg></button></li>
  <li><button>窗口(<u>O</u>)<svg class="arrow"><use href="#right"/></svg></button></li>
  <li><button>星空 V6.935F<svg class="arrow"><use href="#right"/></svg></button></li>
  <li><button>帮助(<u>H</u>)<svg class="arrow"><use href="#right"/></svg></button></li>
</ul>

<ul class="menu insert">
  <li><button><svg class="mi"><use href="#sheet"/></svg>草图(<u>H</u>)...</button></li>
  <li><button><svg class="mi" viewBox="0 0 24 24"><path d="M3 2h7v8H3zM3 14h7v8H3zM13 13h9v9h-9z" fill="none" stroke="#222" stroke-width="2"/><path d="M13 12l1-4 7-7 2 2-7 7z" fill="#e8a030"/></svg>在任务环境中绘制草图(<u>V</u>)</button></li>
  <li><button>草图曲线(<u>S</u>)<svg class="arrow"><use href="#right"/></svg></button></li>
  <li><button>草图约束(<u>K</u>)<svg class="arrow"><use href="#right"/></svg></button></li>
  <li class="rule"></li>
  <li><button>基准/点(<u>D</u>)<svg class="arrow"><use href="#right"/></svg></button></li>
  <li><button>曲线(<u>C</u>)<svg class="arrow"><use href="#right"/></svg></button></li>
  <li><button>派生曲线(<u>U</u>)<svg class="arrow"><use href="#right"/></svg></button></li>
  <li class="rule"></li>
  <li><button><svg class="mi"><use href="#block"/></svg>突出块(<u>B</u>)...</button></li>
  <li><button>折弯(<u>N</u>)<svg class="arrow"><use href="#right"/></svg></button></li>
  <li><button>拐角(<u>O</u>)<svg class="arrow"><use href="#right"/></svg></button></li>
  <li><button>冲孔(<u>H</u>)<svg class="arrow"><use href="#right"/></svg></button></li>
  <li><button>切割(<u>T</u>)<svg class="arrow"><use href="#right"/></svg></button></li>
  <li><button>调整大小(<u>Z</u>)<svg class="arrow"><use href="#right"/></svg></button></li>
  <li><button>成形(<u>R</u>)<svg class="arrow"><use href="#right"/></svg></button></li>
  <li><button>转换(<u>V</u>)<svg class="arrow"><use href="#right"/></svg></button></li>
  <li><button class="hot">展平图样(<u>L</u>)...<svg class="arrow"><use href="#right"/></svg></button></li>
  <li><button>高级钣金(<u>A</u>)<svg class="arrow"><use href="#right"/></svg></button></li>
  <li class="rule"></li>
  <li><button>设计特征(<u>E</u>)<svg class="arrow"><use href="#right"/></svg></button></li>
  <li><button>关联复制(<u>A</u>)<svg class="arrow"><use href="#right"/></svg></button></li>
  <li><button>组合(<u>B</u>)<svg class="arrow"><use href="#right"/></svg></button></li>
  <li><button>修剪(<u>M</u>)<svg class="arrow"><use href="#right"/></svg></button></li>
  <li class="rule"></li>
  <li><button>同步建模(<u>Y</u>)<svg class="arrow"><use href="#right"/></svg></button></li>
  <li class="rule"></li>
  <li><button>表(<u>B</u>)<svg class="arrow"><use href="#right"/></svg></button></li>
</ul>

<ul class="menu flatten">
  <li><button><svg class="mi" viewBox="0 0 24 24"><path d="M2 2h20v6H12v14H6V8H2z" fill="#f0b040" stroke="#b87a20"/><path d="M11 2h12v4H11z" fill="#6f9ae0"/><path d="M21 11c0 5-3 8-7 9" fill="none" stroke="#e08a40" stroke-width="3"/></svg>展平实体(<u>S</u>)...</button></li>
  <li><button class="hot"><svg class="mi"><use href="#flat"/></svg>展平图样(<u>P</u>)</button></li>
  <li><button><svg class="mi" viewBox="0 0 24 24"><path d="M2 1h8v19H2zM10 12h9v8h-9z" fill="#b9c2ec" stroke="#34376e" stroke-width="1.500"/><path d="M2 7h8M2 12h8M15 12v8" stroke="#34376e" stroke-width="1.500"/><path d="M15 17h3v-4l6 6-6 5v-4h-3z" fill="#a02cb0"/></svg>导出展平图样(<u>X</u>)...</button></li>
  <li><button><svg class="mi" viewBox="0 0 24 24"><path d="M14 1h9v9h-9z" fill="#f0d8a8" stroke="#6a4a2a"/><path d="M14 1h4v4h-4zM19 6h4v4h-4z" fill="#c8883c"/><path d="M1 16l9 7 9-6-9-4z" fill="#dfe6f8" stroke="#3a3f78"/><path d="M2 16c1-9 15-9 16 0l-8 4z" fill="#48b848"/><path d="M4 12c3-5 9-5 12 0l-6 3z" fill="#f0d030"/><path d="M6 10c2-3 6-3 8 0l-4 2z" fill="#e04020"/></svg>分析可成型性 - 一步式(<u>Z</u>)...</button></li>
</ul>

<div class="ring ring-menu"></div>
<div class="ring ring-insert"></div>
<div class="ring ring-flat"></div>
<div class="ring ring-pattern"></div>
<svg class="cursor" width="18" height="28"><path d="M1 1l15 15-6 1 3 8-3 1-3-8-6 5z" fill="#eee" stroke="#444"/></svg>

<div class="watermark" aria-hidden="true">
  <svg width="74" height="44" viewBox="0 0 74 44"><g fill="none" stroke-linecap="round" stroke-linejoin="round"><path d="M3 3c7-1 6 8 7 18s5 17 15 17h32c12 0 14-5 14-14V14C71 6 67 3 58 3H30C20 3 18 8 18 15v8c0 5 2 8 5 10M34 9h20M34 16h20M44 4v12M36 24h16" stroke="#8e8e8e" stroke-width="5"/><path d="M3 3c7-1 6 8 7 18s5 17 15 17h32c12 0 14-5 14-14V14C71 6 67 3 58 3H30C20 3 18 8 18 15v8c0 5 2 8 5 10M34 9h20M34 16h20M44 4v12M36 24h16" stroke="#dedede" stroke-width="3"/></g></svg>
  <span>虎课网</span>
</div>
</body>
</html>
```

FILE: styles.css
```css
* { box-sizing: border-box; }

body {
  margin: 0;
  height: 100vh;
  overflow: hidden;
  position: relative;
  display: flex;
  flex-direction: column;
  background: #ebebeb;
  color: #2a2a2a;
  font: 16px/22px "Noto Sans", "Noto Sans CJK SC", sans-serif;
  text-spacing-trim: space-all;
}

button {
  margin: 0;
  padding: 0;
  border: 0;
  background: none;
  color: inherit;
  font: inherit;
}

.defs { position: absolute; }

.app {
  flex: 1;
  min-height: 0;
  display: grid;
  grid-template-columns: 1fr 8px;
}

.main {
  min-width: 0;
  min-height: 0;
  display: flex;
  flex-direction: column;
}

.edge { width: 8px; height: 100%; }
.taskbar { height: 4px; background: #10161c; position: relative; z-index: 5; border-top: 1px solid #66727a; }

.caret { width: 8px; height: 5px; flex: none; fill: #2a2a2a; }
.caret.tall { height: 9px; }
.caret.dim { fill: #9a9a9a; }
.caret.big-caret { width: 10px; height: 6px; }
.sep { width: 1px; height: 28px; background: #c8c8c8; flex: none; }

/* Title bar */
.titlebar { height: 37px; display: flex; align-items: center; padding-bottom: 3px; }
.quick { display: flex; align-items: center; gap: 8px; padding-left: 8px; height: 34px; }
.nx { width: 45px; font: 700 28px/34px "Open Sans", sans-serif; color: #8799a4; }
.qa { height: 24px; display: flex; align-items: center; gap: 8px; }
.qa svg { width: 24px; height: 22px; }
.qa.wide { font-size: 15px; }
.doc-title { flex: 1; margin: 0; text-align: center; font-size: 18px; font-weight: 400; white-space: nowrap; }
.brand { width: 118px; font: 700 19px/22px "Open Sans", sans-serif; color: #12918a; padding-top: 4px; }
.winbtns { display: flex; align-items: center; gap: 17px; padding-right: 10px; }
.winbtns svg, .tabtools svg { display: block; }

/* Ribbon tabs */
.tabs { height: 39px; display: flex; align-items: stretch; gap: 1px; background: #cbcbcb; }
.tab { padding: 0 18px; font-size: 18px; white-space: nowrap; }
.tab.file { width: 114px; background: #5498ae; color: #f4fafc; margin-right: 2px; }
.tab.active { background: #ebebeb; color: #14708a; margin-top: 1px; }
.search {
  margin: 6px 16px 6px auto;
  width: 174px;
  display: flex;
  align-items: center;
  background: #ececec;
  border: 1px solid #b0b0b0;
  padding: 0 4px 0 2px;
}
.search input { flex: 1; min-width: 0; border: 0; padding: 0; background: none; font: inherit; }
.search input::placeholder { color: #a4a4a4; opacity: 1; }
.tabtools { display: flex; align-items: center; gap: 14px; padding-right: 14px; }
.help {
  width: 18px;
  height: 20px;
  border-radius: 50%;
  background: #4a68c4;
  color: #fff;
  font: 700 15px/20px "Open Sans", sans-serif;
}

/* Ribbon */
.ribbon {
  height: 132px;
  display: flex;
  align-items: stretch;
  border-bottom: 1px solid #cacaca;
  padding: 6px 0 5px;
  font-size: 15px;
}
.group { border-right: 1px solid #cacaca; display: flex; flex-direction: column; flex: none; }
.g-plane { width: 87px; }
.g-sketch { width: 249px; }
.g-basic { width: 229px; }
.g-fold { width: 212px; }
.g-corner { width: 132px; }
.g-punch { width: 132px; }
.g-feature { width: 229px; padding-left: 4px; }
.g-form { width: 195px; }
.g-flat { width: 77px; }
.gbody { flex: 1; display: flex; align-items: flex-start; }
.gfoot { height: 18px; line-height: 18px; display: flex; align-items: center; color: #14708a; padding-right: 12px; }
.gfoot span { flex: 1; text-align: center; padding-right: 4px; }

.big {
  display: flex;
  flex-direction: column;
  align-items: center;
  flex: none;
  white-space: nowrap;
  width: 100%;
}
.big.size-s { width: 64px; }
.big.size-m { width: 74px; }
.big.size-l { width: 84px; }
.big.push { margin-left: auto; }
.big .caret { margin-top: 7px; }
.pic { width: 52px; height: 48px; margin-bottom: 3px; display: flex; align-items: center; justify-content: center; }
.pic svg { width: 42px; height: 42px; }
.pic.framed { border: 1px solid #cacaca; border-radius: 4px; }
.pic.framed svg { width: 24px; height: 24px; }

.curves {
  width: 139px;
  height: 93px;
  margin: 0 0 0 5px;
  border: 1px solid #c4c4c4;
  display: grid;
  grid-template-columns: repeat(3, 1fr);
  grid-template-rows: repeat(2, 1fr);
  place-items: center;
}
.curves svg { width: 30px; height: 30px; display: block; }
.scroll { flex: 1; height: 93px; display: flex; flex-direction: column; align-items: center; justify-content: space-around; }
.list { width: 99px; height: 93px; margin-left: 6px; border: 1px solid #c4c4c4; display: flex; flex-direction: column; }
.list.wide { width: 162px; }
.list button { flex: 1; display: flex; align-items: center; gap: 6px; padding-left: 3px; white-space: nowrap; }
.list svg { width: 22px; height: 22px; flex: none; }
.ribbon-more { margin: auto 9px 6px auto; }

/* Selection bar */
.selbar { height: 44px; display: flex; align-items: center; padding-left: 11px; border-bottom: 1px solid #9a9a9a; }
.menu-btn { width: 105px; height: 30px; display: flex; align-items: center; gap: 7px; padding-left: 2px; background: #bfd9e0; white-space: nowrap; }
.menu-btn + .sep { margin: 0 18px 0 5px; }
.combo { position: relative; width: 184px; height: 27px; flex: none; }
.combo select { width: 100%; height: 100%; appearance: none; border: 1px solid #a8a8a8; border-radius: 0; background: #ececec; font: 16px/22px "Noto Sans", "Noto Sans CJK SC", sans-serif; color: inherit; padding: 0 3px; }
.combo .caret { position: absolute; right: 8px; top: 11px; }
.combo.second { width: 194px; margin-left: 14px; }
.tools { display: flex; align-items: center; gap: 3px; margin-left: 9px; }
.tools .caret { margin: 0 3px; }
.tools .sep { height: 34px; margin: 0 9px; }
.tool { width: 32px; height: 31px; display: flex; align-items: center; justify-content: center; }
.tool.slim { width: 26px; }
.tool.on { background: #bcd6dc; }
.tool svg { width: 22px; height: 22px; }
.selbar-more { margin: 16px 9px 0 auto; }

/* Work area */
.work { flex: 1; min-height: 0; display: flex; }
.resources { width: 45px; background: #cecece; border-right: 1px solid #a8a8a8; display: flex; flex-direction: column; align-items: center; }
.res-tab { align-self: flex-end; width: 42px; height: 66px; margin-top: 174px; background: #ececec; border: 1px solid #a8a8a8; }
.res-mark { align-self: flex-start; width: 3px; height: 22px; margin: 19px 0 0 8px; background: #dc924c; }
.res-icons { display: flex; flex-direction: column; gap: 25px; margin-top: auto; padding-left: 5px; }
.res-icons button:first-child { margin-bottom: 16px; }
.res-icons svg { display: block; }
.squiggle { margin: 0 0 12px; flex: none; }
.res-scroll { display: flex; flex-direction: column; align-items: center; gap: 16px; padding-bottom: 12px; }

.navigator { width: 396px; padding: 0 0 10px 9px; display: flex; flex-direction: column; }
.rows { flex: 1; border-left: 1px solid #b0b0b0; background: repeating-linear-gradient(to top, #ebebeb 0 27px, #d6d6d6 27px 28px, #e7e7e7 28px 55px, #d6d6d6 55px 56px); }
.hscroll { height: 28px; border-left: 1px solid #b0b0b0; display: flex; align-items: center; gap: 13px; padding-left: 9px; fill: #555; }
.thumb { flex: 1; height: 20px; border: 1px solid #999; background: linear-gradient(#e4e4e4, #b8b8b8); padding-left: 80px; color: #666; font: 12px/18px "Liberation Sans", sans-serif; }
.nav-foot { height: 7px; background: #c4c4c4; border: 1px solid #a4a4a4; }

.stage { flex: 1; min-width: 0; position: relative; overflow: hidden; background: linear-gradient(#a9aaac, #b8b9bb 25%, #c8c9cb 55%, #d6d7d8 80%, #d6d7d8); }
.scene { position: absolute; left: 0; top: 0; width: 100%; height: 100%; }
.axis { font: 18px "Open Sans", sans-serif; }
.axis.z { fill: #3a6ad8; }
.axis.x { fill: #d06068; }
.note { position: absolute; margin: 0; color: #f00; font: 500 51px/50px "Noto Sans CJK SC", sans-serif; white-space: nowrap; }
.note.first { left: 466px; top: 66px; }
.note.second { left: 4px; top: 81px; }

.status { height: 30px; flex: none; border-top: 1px solid #a8a8a8; display: flex; align-items: center; justify-content: space-between; padding: 0 78px 4px 4px; font-weight: 700; white-space: nowrap; }
.status-icons { display: flex; gap: 6px; padding-top: 3px; }

/* Menus */
.menu { position: absolute; margin: 0; padding: 3px 4px; list-style: none; background: #ebebeb; border: 1px solid #a4a4a4; box-shadow: 1px 1px 2px rgba(0, 0, 0, .2); }
.menu li { height: 34px; display: flex; align-items: center; }
.menu li.rule { height: 11px; padding: 0 12px 0 14px; }
.rule::before { content: ""; flex: 1; height: 1px; background: #bdbdbd; }
.menu button { position: relative; width: 100%; height: 31px; display: flex; align-items: center; white-space: pre; text-align: left; }
.menu u { text-underline-offset: 2px; }
.menu .hot { background: #a6c6cf; }
.menu .arrow { width: 6px; height: 10px; margin-left: auto; margin-right: 6px; fill: #2a2a2a; }
.menu .mi { position: absolute; left: 7px; width: 22px; height: 22px; }
.root { left: 11px; top: 246px; width: 172px; padding: 1px 2px 1px 4px; }
.root button { padding-left: 39px; }
.insert { left: 182px; top: 232px; width: 259px; min-height: 848px; }
.insert button { padding-left: 39px; }
.flatten { left: 437px; top: 767px; width: 273px; }
.flatten button { padding-left: 39px; }

/* Callouts */
.ring { position: absolute; border: 5px solid #f00; border-radius: 50%; }
.ring-menu { left: 13px; top: 216px; width: 127px; height: 32px; }
.ring-insert { left: 35px; top: 347px; width: 99px; height: 50px; }
.ring-flat { left: 209px; top: 764px; width: 131px; height: 39px; }
.ring-pattern { left: 433px; top: 799px; width: 145px; height: 43px; }
.cursor { position: absolute; left: 476px; top: 818px; }

.watermark { position: absolute; right: 18px; top: 12px; display: flex; align-items: flex-end; opacity: .8; }
.watermark svg { margin-bottom: 2px; }
.watermark span { font: 500 47px/58px "Noto Sans CJK SC", sans-serif; color: #dedede; -webkit-text-stroke: 1px #8e8e8e; }
```
